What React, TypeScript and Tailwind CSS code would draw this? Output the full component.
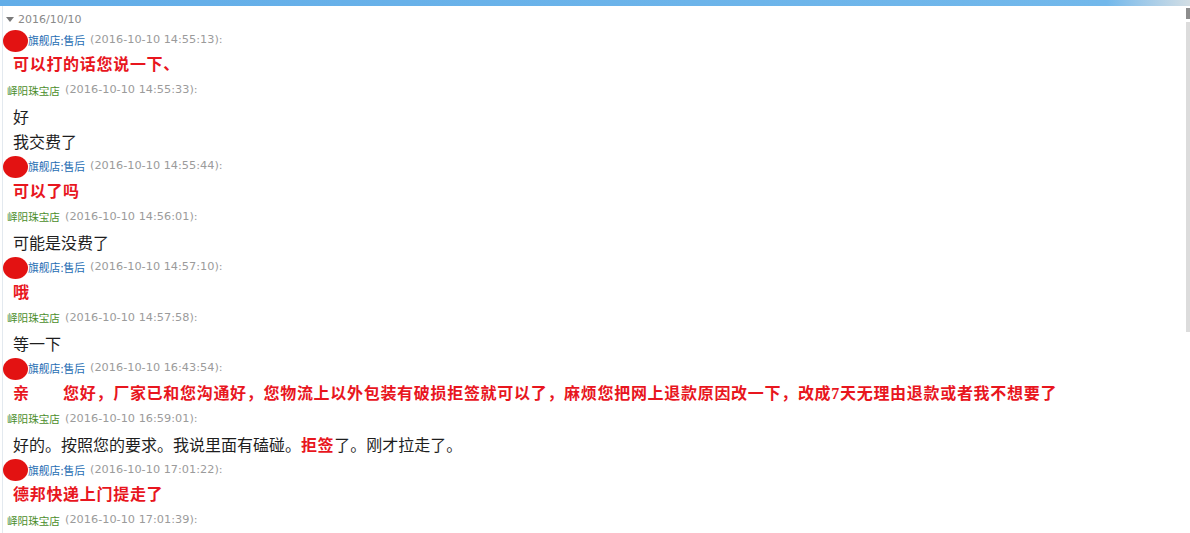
import React from "react";

type Item =
  | { kind: "h"; who: "shop" | "me"; time: string }
  | { kind: "m"; red?: boolean; content: React.ReactNode };

const items: Item[] = [
  { kind: "h", who: "shop", time: "2016-10-10 14:55:13" },
  { kind: "m", red: true, content: "可以打的话您说一下、" },
  { kind: "h", who: "me", time: "2016-10-10 14:55:33" },
  { kind: "m", content: "好" },
  { kind: "m", content: "我交费了" },
  { kind: "h", who: "shop", time: "2016-10-10 14:55:44" },
  { kind: "m", red: true, content: "可以了吗" },
  { kind: "h", who: "me", time: "2016-10-10 14:56:01" },
  { kind: "m", content: "可能是没费了" },
  { kind: "h", who: "shop", time: "2016-10-10 14:57:10" },
  { kind: "m", red: true, content: "哦" },
  { kind: "h", who: "me", time: "2016-10-10 14:57:58" },
  { kind: "m", content: "等一下" },
  { kind: "h", who: "shop", time: "2016-10-10 16:43:54" },
  {
    kind: "m",
    red: true,
    content:
      "亲\u3000\u3000您好，厂家已和您沟通好，您物流上以外包装有破损拒签就可以了，麻烦您把网上退款原因改一下，改成7天无理由退款或者我不想要了",
  },
  { kind: "h", who: "me", time: "2016-10-10 16:59:01" },
  {
    kind: "m",
    content: (
      <>
        好的。按照您的要求。我说里面有磕碰。
        <span className="font-bold text-[#e8161e] tracking-[0.6px] [font-family:'Liberation_Serif','Noto_Sans_CJK_SC',serif]">
          拒签
        </span>
        了。刚才拉走了。
      </>
    ),
  },
  { kind: "h", who: "shop", time: "2016-10-10 17:01:22" },
  { kind: "m", red: true, content: "德邦快递上门提走了" },
  { kind: "h", who: "me", time: "2016-10-10 17:01:39" },
];

function Header({ who, time }: { who: "shop" | "me"; time: string }) {
  return (
    <div className="relative flex h-[25.6px] items-center pl-[4px] text-[11px] whitespace-nowrap [font-family:'DejaVu_Sans','Noto_Sans_CJK_SC',sans-serif]">
      {who === "shop" ? (
        <>
          <span className="absolute left-[0px] top-[2px] h-[22px] w-[25px] rounded-[50%] bg-[#e31212]" />
          <span className="text-[10.8px] text-[#1f6db3] [font-family:'Noto_Sans_CJK_SC',sans-serif]">
            <span className="inline-block w-[21px]" />
            旗舰店:售后
          </span>
        </>
      ) : (
        <span className="text-[10.6px] text-[#4b8d2b] [font-family:'Noto_Sans_CJK_SC',sans-serif]">
          峄阳珠宝店
        </span>
      )}
      <span className="ml-[5px] text-[11.3px] text-[#9b9b9b]">({time}):</span>
    </div>
  );
}

function Message({ red, content }: { red?: boolean; content: React.ReactNode }) {
  return (
    <div
      className={
        red
          ? "flex h-[25.6px] items-center whitespace-nowrap pl-[10px] text-[16px] font-bold tracking-[0.7px] text-[#e8161e] [font-family:'Liberation_Serif','Noto_Sans_CJK_SC',serif]"
          : "flex h-[25.6px] items-center whitespace-nowrap pl-[10px] text-[16px] text-[#1e1e1e] [font-family:'Noto_Sans_CJK_SC',sans-serif]"
      }
    >
      <span>{content}</span>
    </div>
  );
}

export default function App() {
  return (
    <div className="flex h-[533px] w-[1190px] flex-col overflow-hidden bg-white">
      <div className="h-[6px] w-full bg-linear-to-r from-[#62ade8] via-[#72b8eb] via-93% to-[#d3dee4]" />
      <div className="flex min-h-0 flex-1">
        <div className="ml-[2px] flex min-w-0 flex-1 flex-col border-l border-[#e3e9ef] pt-[6px]">
          <div className="flex h-[15.5px] items-center gap-[4px] pl-[3px] text-[11px] text-[#8a8a8a] [font-family:'DejaVu_Sans',sans-serif]">
            <svg width="8" height="5" viewBox="0 0 8 5">
              <path d="M0 0 L8 0 L4 5 Z" fill="#7a7a7a" />
            </svg>
            <span>2016/10/10</span>
          </div>
          {items.map((it, i) =>
            it.kind === "h" ? (
              <Header key={i} who={it.who} time={it.time} />
            ) : (
              <Message key={i} red={it.red} content={it.content} />
            )
          )}
        </div>
        <div className="flex w-[4px] flex-col pt-[2px]">
          <div className="h-[11px] w-full bg-[#8d8d8d]" />
          <div className="mt-[3px] h-[310px] w-full bg-[#dcdcdc]" />
        </div>
      </div>
    </div>
  );
}
